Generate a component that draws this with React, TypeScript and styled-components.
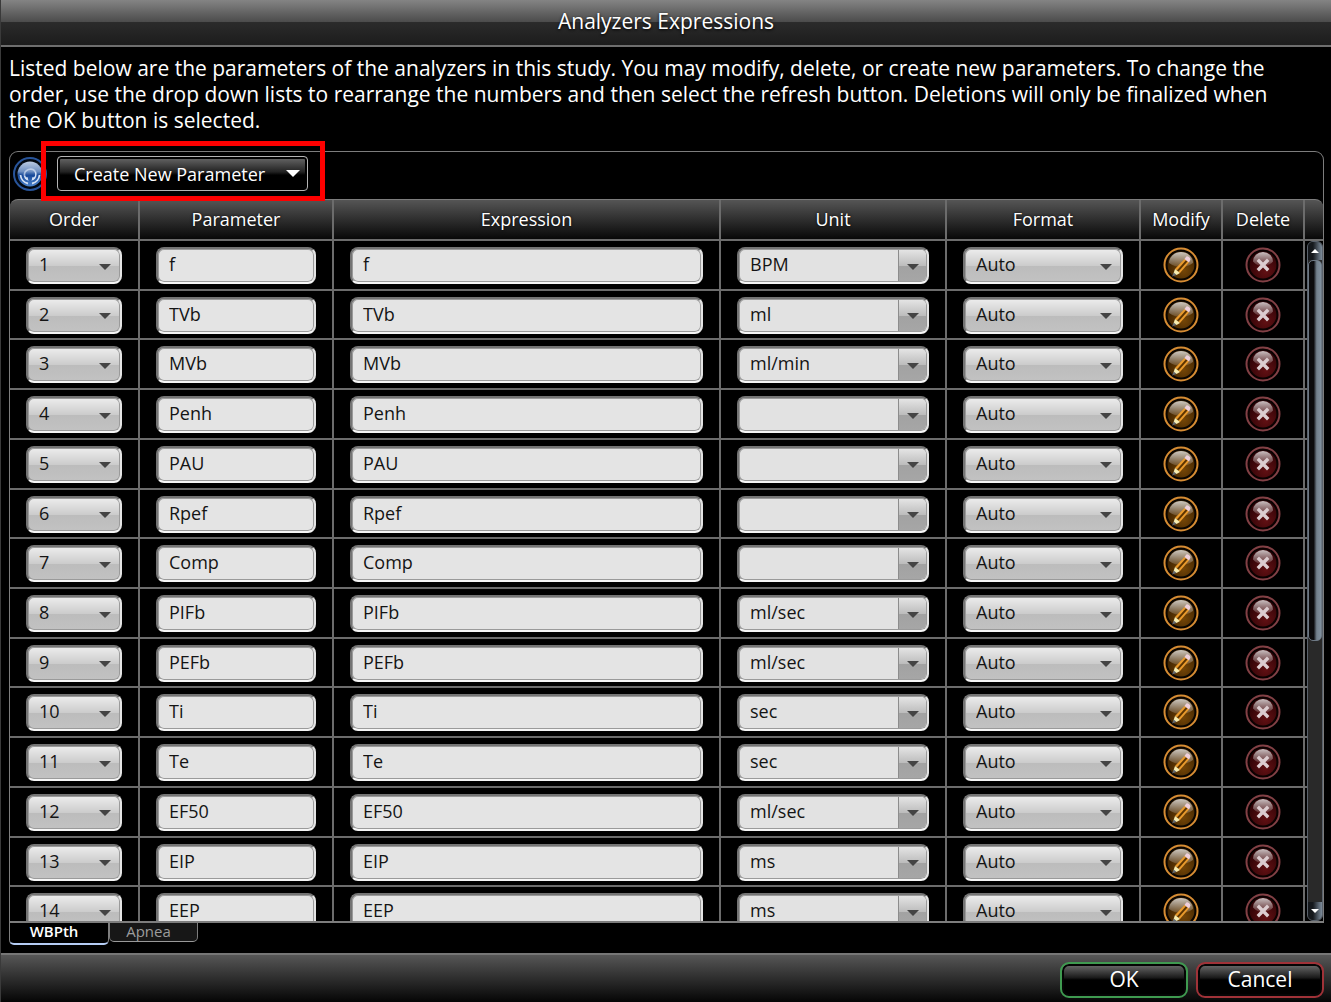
import React from "react";
import styled, { createGlobalStyle, css } from "styled-components";

const line = "#7d7d7d";
const columns = "130px 194px minmax(120px, 1fr) 226px 194px 82px 82px 18px";

const GlobalStyle = createGlobalStyle`
  * { box-sizing: border-box; }
  body { margin: 0; background: #000; }
  button, input, select { font-family: inherit; margin: 0; }
`;

const Dialog = styled.main`
  display: flex;
  flex-direction: column;
  height: 100vh;
  min-width: 1100px;
  overflow: hidden;
  background: #000;
  color: #fff;
  font-family: "Open Sans", "Noto Sans", sans-serif;
  border-left: 1px solid #3a3a3a;
`;

const TitleBar = styled.header`
  display: flex;
  align-items: center;
  justify-content: center;
  height: 47px;
  padding-bottom: 3px;
  border-bottom: 2px solid #6e6e6e;
  background: linear-gradient(#848484 0, #4a4a4a 50%, #2b2b2b 50%, #1c1c1c 100%);
`;

const Title = styled.h1`
  margin: 0;
  font-size: 21px;
  font-weight: 400;
  line-height: 26px;
  text-shadow: 0 1px 3px #000;
`;

const Content = styled.section`
  display: flex;
  flex: 1;
  flex-direction: column;
  min-height: 0;
  padding: 8px 7px 8px 8px;
`;

const Intro = styled.p`
  margin: 0 0 18px;
  padding-right: 36px;
  font-size: 21px;
  line-height: 26px;
`;

const Panel = styled.div`
  display: flex;
  flex: 1;
  flex-direction: column;
  min-height: 0;
  border: 1px solid ${line};
  border-bottom: 2px solid ${line};
  border-radius: 9px 9px 0 0;
`;

const Toolbar = styled.div`
  display: flex;
  align-items: center;
  gap: 10px;
  height: 47px;
  padding: 0 3px 4px;
`;

const IconButton = styled.button`
  display: block;
  padding: 0;
  border: 0;
  background: none;
  cursor: pointer;

  svg { display: block; }
`;

const Highlighted = styled.div`
  position: relative;

  &::after {
    content: "";
    position: absolute;
    inset: -15px -17px -10px -16px;
    border: 5px solid #fe0000;
    pointer-events: none;
  }
`;

const CreateButton = styled.button`
  display: flex;
  align-items: center;
  justify-content: space-between;
  width: 251px;
  height: 35px;
  padding: 0 7px 0 16px;
  border: 1px solid #b4b4b4;
  border-radius: 4px;
  background: linear-gradient(#6a6a6a 0, #222 45%, #000 55%);
  box-shadow: inset 0 0 0 2px #000;
  color: #fff;
  font-size: 18px;
  font-weight: 500;
  line-height: 26px;
`;

const Arrow = styled.span<{ $size: number; $color: string }>`
  width: 0;
  height: 0;
  border: ${(p) => p.$size}px solid transparent;
  border-top-color: ${(p) => p.$color};
  border-bottom: 0;
`;

const TableArea = styled.div`
  display: grid;
  flex: 1;
  grid-template-rows: minmax(0, 1fr);
  grid-template-columns: minmax(0, 1fr);
  min-height: 0;
`;

const Table = styled.table`
  display: flex;
  flex-direction: column;
  grid-area: 1 / 1;
  min-height: 0;
  overflow: hidden;
`;

const Head = styled.thead`
  display: block;
  flex: none;
  border-top: 1px solid ${line};
  border-bottom: 2px solid #6c6c6c;
  border-radius: 8px 8px 0 0;
  background: linear-gradient(#555, #080808);
`;

const HeadRow = styled.tr`
  display: grid;
  grid-template-columns: ${columns};
  height: 39px;
`;

const HeadCell = styled.th`
  padding: 0;
  font-size: 18px;
  font-weight: 400;
  line-height: 38px;
  text-align: center;
  border-right: 2px solid #6c6c6c;
  text-shadow: 0 0 3px #000;

  &:last-child { border-right: 0; }
`;

const Body = styled.tbody`
  display: grid;
  flex: none;
  grid-auto-rows: 1fr;
  height: 696px;
`;

const Row = styled.tr`
  display: grid;
  grid-template-columns: ${columns};
  border-bottom: 2px solid #6c6c6c;
`;

const Cell = styled.td`
  padding: 6px 16px 0;
  border-right: 2px solid #6c6c6c;

  &:last-child { border-right: 0; }
`;

const IconCell = styled(Cell)`
  display: flex;
  justify-content: center;
  align-items: flex-start;
  padding: 6px 0 0;
`;

const field = css`
  width: 100%;
  height: 37px;
  padding: 0 11px 3px;
  border: 2px solid;
  border-color: #747474 #e4e4e4 #f6f6f6 #747474;
  border-radius: 8px;
  box-shadow: inset 0 0 0 1px #9a9a9a;
  color: #141414;
  font-size: 18px;
  line-height: 26px;
  outline: 0;
`;

const TextField = styled.input`
  ${field}
  display: block;
  background: #e4e4e4;
`;

const SelectWrap = styled.div`
  display: grid;
  align-items: center;
`;

const Select = styled.select<{ $editable?: boolean }>`
  ${field}
  grid-area: 1 / 1;
  appearance: none;
  background: ${(p) => (p.$editable ? "#e2e2e2" : "linear-gradient(#ededed 0, #cccccc 50%, #bcbcbc 51%, #c2c2c2 100%)")};
`;

const SelectArrow = styled.span<{ $editable?: boolean }>`
  display: flex;
  align-items: center;
  justify-content: center;
  grid-area: 1 / 1;
  justify-self: end;
  width: 28px;
  height: 31px;
  margin-right: 3px;
  padding-top: 2px;
  pointer-events: none;
  ${(p) =>
    p.$editable &&
    css`
      border-left: 1px solid #8c8c8c;
      border-radius: 0 5px 5px 0;
      background: linear-gradient(#e4e4e4 0, #bdbdbd 50%, #a2a2a2 51%, #a6a6a6 100%);
    `}
`;

const ScrollBar = styled.div`
  display: flex;
  flex-direction: column;
  grid-area: 1 / 1;
  justify-self: end;
  width: 16px;
  margin: 42px 0 0;
  border: 1px solid #59616b;
  border-radius: 6px;
  background: #292929;
  overflow: hidden;
`;

const ScrollButton = styled.button<{ $down?: boolean }>`
  display: flex;
  flex: none;
  align-items: center;
  justify-content: center;
  height: 18px;
  padding: 0;
  border: 0;
  background: linear-gradient(90deg, #15181c 0 35%, #56616d 75%, #7c8b99);

  span { transform: ${(p) => (p.$down ? "none" : "rotate(180deg)")}; }
`;

const Thumb = styled.div`
  flex: 382;
  border: 1px solid #6d7884;
  border-radius: 5px;
  background: linear-gradient(90deg, #0c0c0e 0 40%, #3b424a 50%, #74828f 65%, #7f8f9d);
`;

const TrackRest = styled.div`
  flex: 263;
`;

const Tabs = styled.div`
  display: flex;
  align-items: flex-start;
  height: 22px;
`;

const Tab = styled.button<{ $active?: boolean }>`
  width: ${(p) => (p.$active ? 100 : 89)}px;
  height: ${(p) => (p.$active ? 22 : 19)}px;
  padding: 0 10px 4px 0;
  border: 1px solid ${line};
  border-top: 0;
  border-bottom: ${(p) => (p.$active ? "2px solid #b5cdf5" : "1px solid #999")};
  border-radius: 0 0 5px 5px;
  background: ${(p) => (p.$active ? "#000" : "#171717")};
  color: ${(p) => (p.$active ? "#fff" : "#9c9c9c")};
  font-size: 15px;
  font-weight: ${(p) => (p.$active ? 600 : 400)};
  line-height: 16px;
`;

const Footer = styled.footer`
  display: flex;
  align-items: flex-end;
  justify-content: flex-end;
  gap: 8px;
  height: 49px;
  padding: 0 7px 4px;
  border-top: 2px solid #767676;
  background: linear-gradient(#565656, #050505);
`;

const DialogButton = styled.button<{ $accent: string }>`
  width: 128px;
  height: 36px;
  padding: 0 0 3px;
  border: 2px solid ${(p) => p.$accent};
  border-radius: 9px;
  background: linear-gradient(#707070 0, #1c1c1c 42%, #000 50%);
  box-shadow: inset 0 0 0 2px #050505;
  color: #fff;
  font-size: 21px;
  line-height: 28px;
`;

const Gradients = styled.svg`
  position: absolute;
  width: 0;
  height: 0;
`;

const IconGradients = () => (
  <Gradients aria-hidden="true">
    <defs>
      <linearGradient id="gloss" x1="0" y1="0" x2="0" y2="1">
        <stop offset="0" stopColor="#fff" stopOpacity="0.75" />
        <stop offset="1" stopColor="#fff" stopOpacity="0.12" />
      </linearGradient>
      <radialGradient id="amber" cx="0.6" cy="0.7" r="0.7">
        <stop offset="0" stopColor="#754607" />
        <stop offset="1" stopColor="#3a2000" />
      </radialGradient>
      <radialGradient id="crimson" cx="0.6" cy="0.75" r="0.7">
        <stop offset="0" stopColor="#611013" />
        <stop offset="1" stopColor="#300306" />
      </radialGradient>
      <linearGradient id="azure" x1="0" y1="0" x2="0" y2="1">
        <stop offset="0" stopColor="#bccbe2" />
        <stop offset="0.4" stopColor="#6f90c2" />
        <stop offset="0.55" stopColor="#17499a" />
        <stop offset="1" stopColor="#4d84cc" />
      </linearGradient>
    </defs>
  </Gradients>
);

const PencilIcon = () => (
  <svg width="36" height="36" viewBox="0 0 36 36" aria-hidden="true">
    <circle cx="18" cy="18" r="16.5" fill="#0a0500" stroke="#d68c33" strokeWidth="2" />
    <circle cx="18" cy="18" r="13.4" fill="url(#amber)" />
    <path d="M6 16a12 11 0 0 1 24 0q-5.500 4-12 4t-12-4z" fill="url(#gloss)" />
    <path d="M12 22 21.500 12l4.500 3.500-9 10.500z" fill="#e99a2c" />
    <path d="M14.600 24.200 23.700 13.800" stroke="#5b3300" strokeWidth="2" />
    <path d="M21.500 12 23.300 9.600q1-.8 2.600.4t1.600 2.500l-1.500 3z" fill="#efd0dc" />
    <path d="m12 22 5 4-3.500 2-3-1.500z" fill="#f7edb0" />
    <path d="m10.800 25.600 2.700 2.400-4.500 1.500z" fill="#666b70" />
  </svg>
);

const DeleteIcon = () => (
  <svg width="36" height="36" viewBox="0 0 36 36" aria-hidden="true">
    <circle cx="18" cy="18" r="16.500" fill="#0b0101" stroke="#824045" strokeWidth="2" />
    <circle cx="18" cy="18" r="13.400" fill="url(#crimson)" />
    <path d="M8 14.500a10 9.500 0 0 1 20 0q-4 4.500-10 4.500t-10-4.500z" fill="url(#gloss)" />
    <path
      d="m14 14 2 2m4 4 2 2m0-8-2 2m-4 4-2 2"
      stroke="#dccdd0"
      strokeWidth="3.400"
      strokeLinecap="square"
    />
    <path d="m15 15 6 6m0-6-6 6" stroke="#dccdd0" strokeWidth="2.400" />
  </svg>
);

const RefreshIcon = () => (
  <svg width="34" height="34" viewBox="0 0 34 34" aria-hidden="true">
    <circle cx="17" cy="17" r="16" fill="#020810" stroke="#28549a" strokeWidth="2" />
    <circle cx="17" cy="17" r="12.500" fill="url(#azure)" />
    <g fill="none" stroke="#d3e0f3">
      <path d="M11.500 19a6 6 0 0 1 11-4" strokeWidth="1.600" strokeOpacity="0.7" />
      <path d="M22.500 15a6 6 0 0 1-3 7.500" strokeWidth="1.600" />
      <path d="M11.500 19a6 6 0 0 0 3 3.500" strokeWidth="1.600" />
      <path d="M7.500 18a9.500 9.500 0 0 0 7.500 8.500" strokeWidth="1.800" />
      <path d="M26.500 18a9.500 9.500 0 0 1-7.500 8.500" strokeWidth="1.800" />
    </g>
    <path d="m19.500 20 3 1-4 3zM14.500 20l-3 1 4 3z" fill="#d3e0f3" />
  </svg>
);

interface Parameter {
  name: string;
  unit: string;
}

const parameters: Parameter[] = [
  { name: "f", unit: "BPM" },
  { name: "TVb", unit: "ml" },
  { name: "MVb", unit: "ml/min" },
  { name: "Penh", unit: "" },
  { name: "PAU", unit: "" },
  { name: "Rpef", unit: "" },
  { name: "Comp", unit: "" },
  { name: "PIFb", unit: "ml/sec" },
  { name: "PEFb", unit: "ml/sec" },
  { name: "Ti", unit: "sec" },
  { name: "Te", unit: "sec" },
  { name: "EF50", unit: "ml/sec" },
  { name: "EIP", unit: "ms" },
  { name: "EEP", unit: "ms" },
];

const headings = ["Order", "Parameter", "Expression", "Unit", "Format", "Modify", "Delete"];

interface DropDownProps {
  label: string;
  value: string;
  editable?: boolean;
}

const DropDown = ({ label, value, editable }: DropDownProps) => (
  <SelectWrap>
    <Select aria-label={label} defaultValue={value} $editable={editable}>
      <option value={value}>{value}</option>
    </Select>
    <SelectArrow $editable={editable}>
      <Arrow $size={6} $color="#444" />
    </SelectArrow>
  </SelectWrap>
);

export default function App() {
  return (
    <Dialog>
      <GlobalStyle />
      <IconGradients />
      <TitleBar>
        <Title>Analyzers Expressions</Title>
      </TitleBar>
      <Content>
        <Intro>
          Listed below are the parameters of the analyzers in this study. You may modify, delete, or create new
          parameters. To change the order, use the drop down lists to rearrange the numbers and then select the
          refresh button. Deletions will only be finalized when the OK button is selected.
        </Intro>
        <Panel>
          <Toolbar>
            <IconButton aria-label="Refresh">
              <RefreshIcon />
            </IconButton>
            <Highlighted>
              <CreateButton>
                Create New Parameter
                <Arrow $size={7} $color="#fff" />
              </CreateButton>
            </Highlighted>
          </Toolbar>
          <TableArea>
            <Table>
              <Head>
                <HeadRow>
                  {headings.map((heading) => (
                    <HeadCell key={heading}>{heading}</HeadCell>
                  ))}
                  <HeadCell />
                </HeadRow>
              </Head>
              <Body>
                {parameters.map(({ name, unit }, index) => (
                  <Row key={name}>
                    <Cell>
                      <DropDown label={`Order of ${name}`} value={String(index + 1)} />
                    </Cell>
                    <Cell>
                      <TextField aria-label={`Name of ${name}`} defaultValue={name} />
                    </Cell>
                    <Cell>
                      <TextField aria-label={`Expression of ${name}`} defaultValue={name} />
                    </Cell>
                    <Cell>
                      <DropDown label={`Unit of ${name}`} value={unit} editable />
                    </Cell>
                    <Cell>
                      <DropDown label={`Format of ${name}`} value="Auto" />
                    </Cell>
                    <IconCell>
                      <IconButton aria-label={`Modify ${name}`}>
                        <PencilIcon />
                      </IconButton>
                    </IconCell>
                    <IconCell>
                      <IconButton aria-label={`Delete ${name}`}>
                        <DeleteIcon />
                      </IconButton>
                    </IconCell>
                    <Cell />
                  </Row>
                ))}
              </Body>
            </Table>
            <ScrollBar>
              <ScrollButton aria-label="Scroll up">
                <Arrow $size={4} $color="#fff" />
              </ScrollButton>
              <Thumb />
              <TrackRest />
              <ScrollButton aria-label="Scroll down" $down>
                <Arrow $size={4} $color="#fff" />
              </ScrollButton>
            </ScrollBar>
          </TableArea>
        </Panel>
        <Tabs role="tablist">
          <Tab role="tab" aria-selected="true" $active>
            WBPth
          </Tab>
          <Tab role="tab" aria-selected="false">
            Apnea
          </Tab>
        </Tabs>
      </Content>
      <Footer>
        <DialogButton $accent="#3f9a50">OK</DialogButton>
        <DialogButton $accent="#a03238">Cancel</DialogButton>
      </Footer>
    </Dialog>
  );
}
